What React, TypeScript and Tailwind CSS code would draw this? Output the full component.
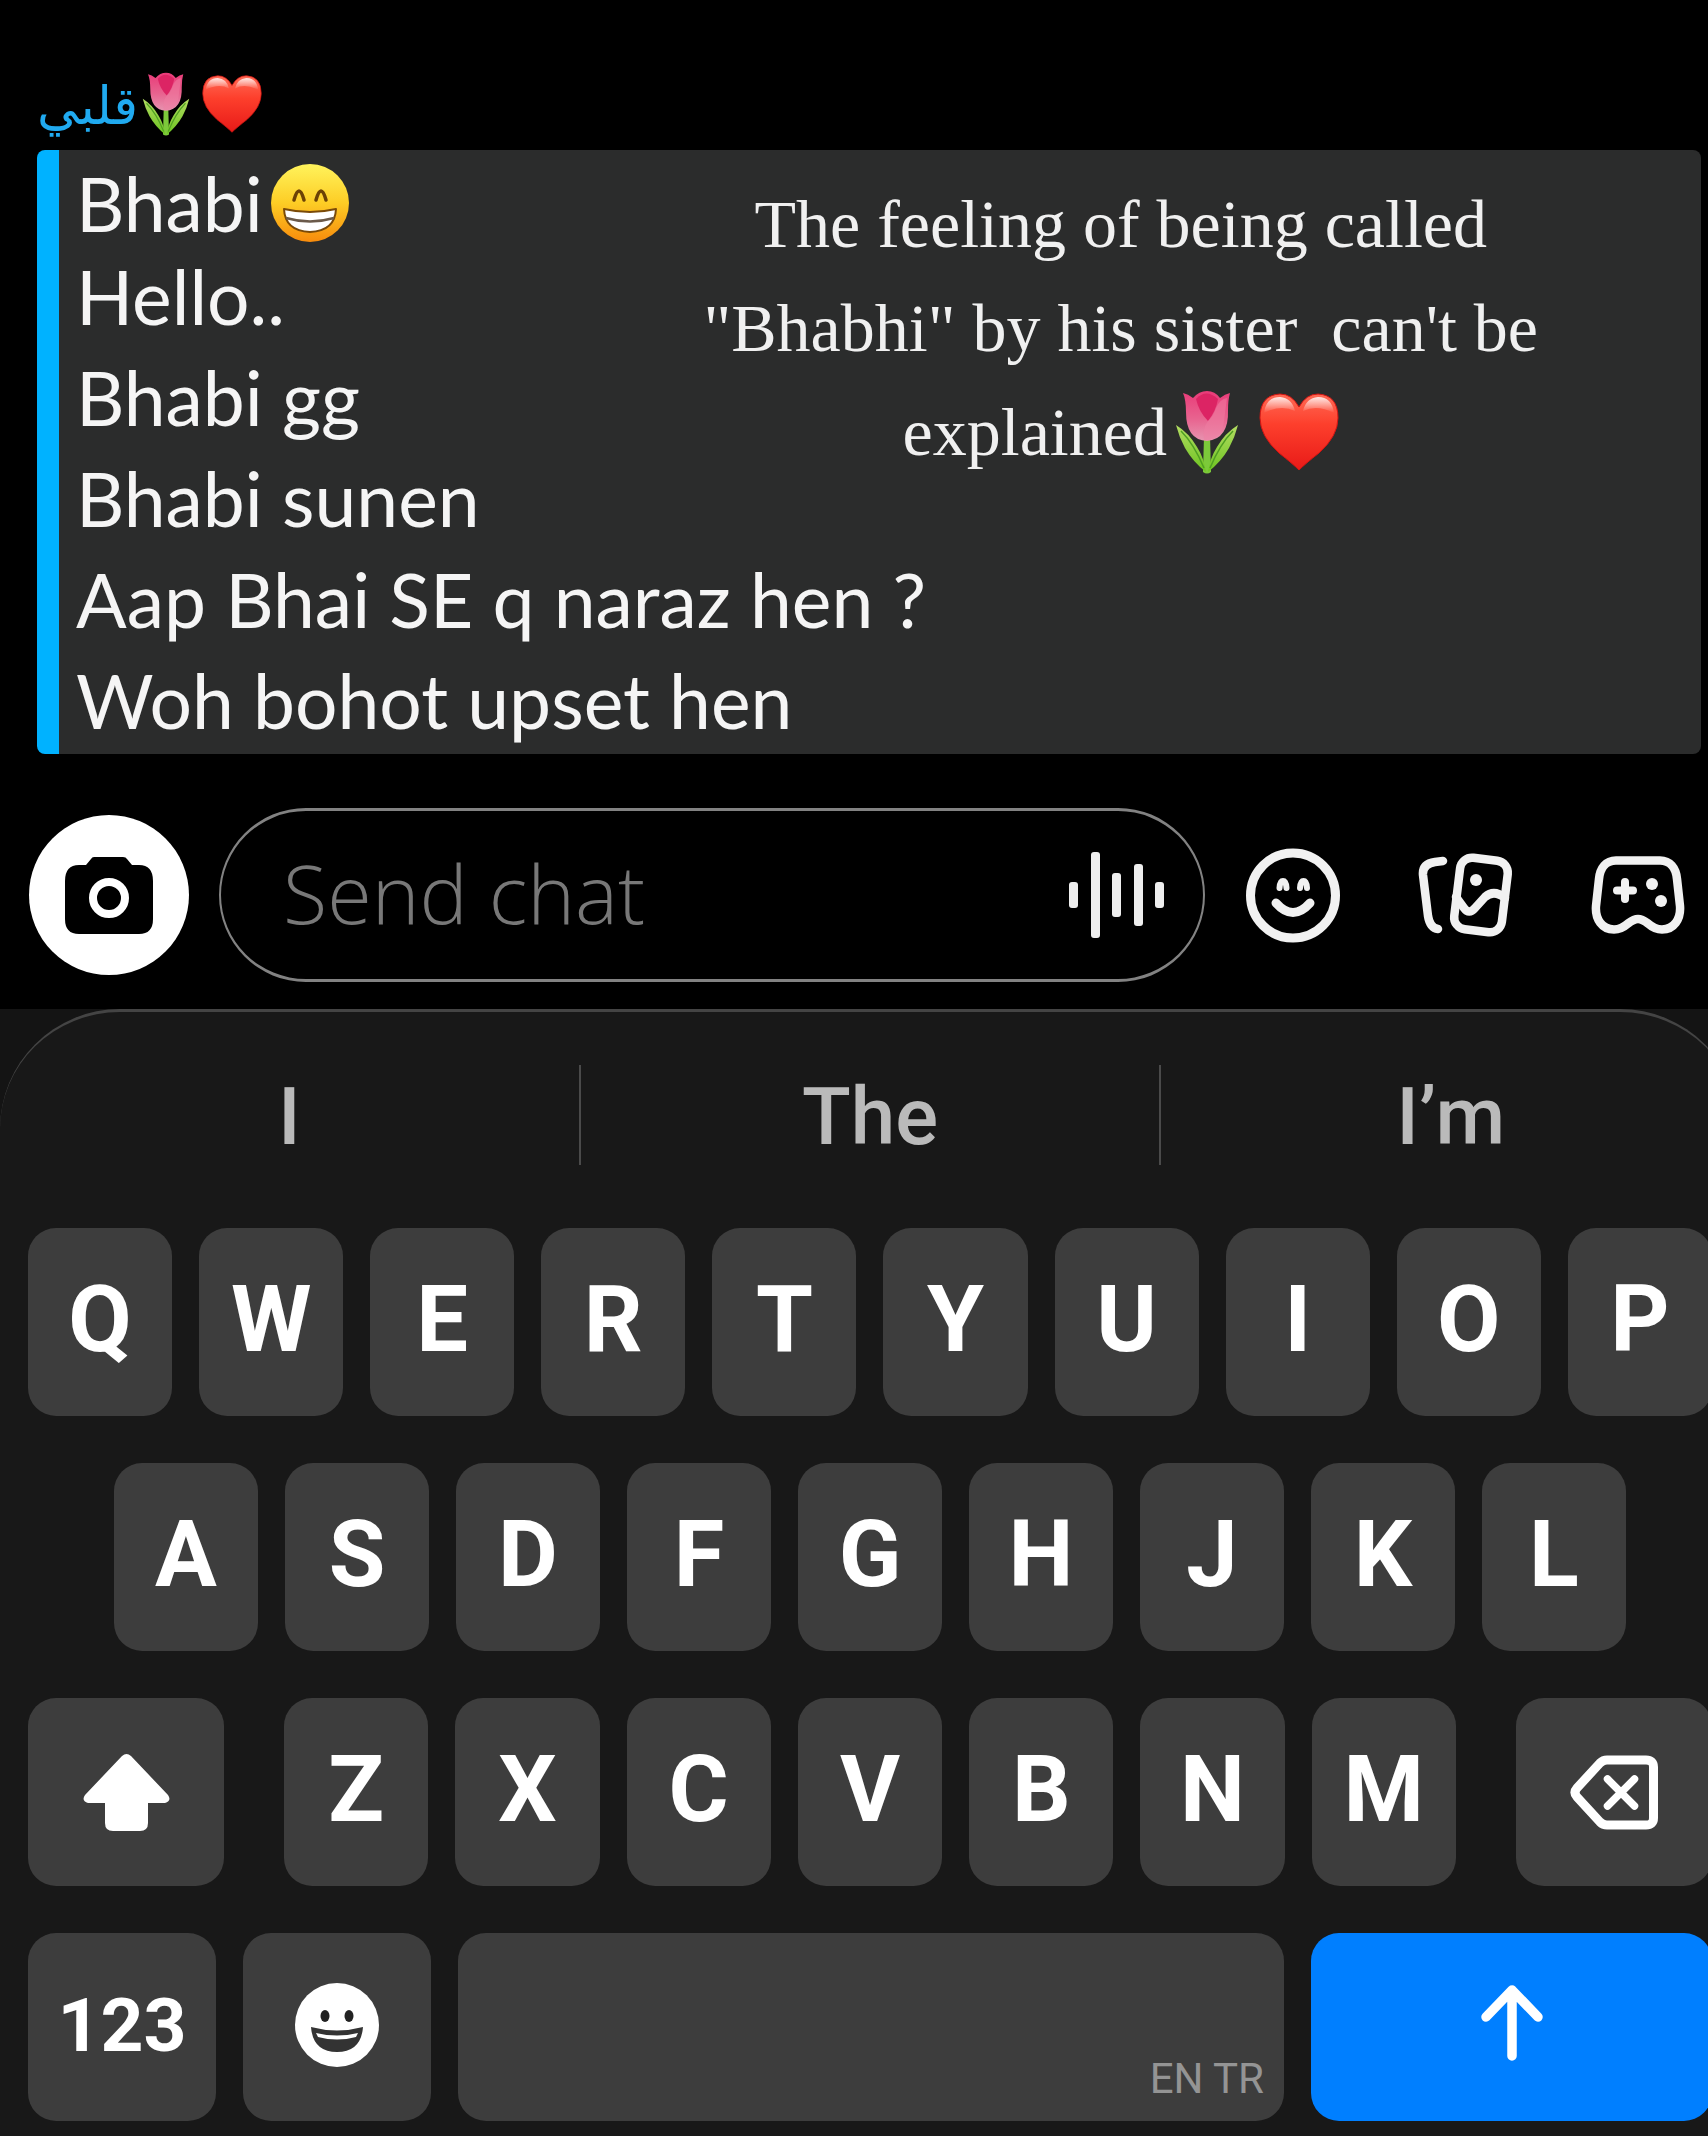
import type { ReactNode } from 'react';

const messages = ['Hello..', 'Bhabi gg', 'Bhabi sunen', 'Aap Bhai SE q naraz hen ?', 'Woh bohot upset hen'];
const suggestions = ['I', 'The', 'I’m'];

function Tulip({ className }: { className: string }) {
  return (
    <svg viewBox="0 0 64 84" preserveAspectRatio="none" className={className} role="img" aria-label="tulip">
      <defs>
        <linearGradient id="petal" x1="0" y1="0" x2="0" y2="1">
          <stop offset="0" stopColor="#e93a78" />
          <stop offset="0.55" stopColor="#e8638f" />
          <stop offset="1" stopColor="#e794b0" />
        </linearGradient>
        <linearGradient id="leaf" x1="0" y1="0" x2="0" y2="1">
          <stop offset="0" stopColor="#b3dc62" />
          <stop offset="1" stopColor="#6cc420" />
        </linearGradient>
      </defs>
      <path d="M29 46h6l1 36q-4 3-8 0Z" fill="#7cc93a" />
      <path d="M1 35Q14 43 22 57Q29 68 31 82Q18 72 10 58Q4 47 1 35Z" fill="url(#leaf)" />
      <path d="M63 35Q50 43 42 57Q35 68 33 82Q46 72 54 58Q60 47 63 35Z" fill="url(#leaf)" />
      <path d="M6 41Q19 54 29 78" fill="none" stroke="#4f9f22" strokeWidth="1.5" />
      <path d="M58 41Q45 54 35 78" fill="none" stroke="#4f9f22" strokeWidth="1.5" />
      <path d="M8 3Q13 4 18 8Q24 1 32 1Q40 1 45 8Q50 4 55 3Q53 10 53 20Q54 49 32 51Q11 50 11 22Q11 10 8 3Z" fill="url(#petal)" />
      <path d="M21 9Q31-2 43 9Q41 21 33 31Q24 22 21 9Z" fill="#dc2464" />
      <path d="M33 31Q27 39 29 50Q47 51 49 31L52 8Q45 9 41 18Q38 27 33 31Z" fill="#ef7ea3" opacity="0.55" />
    </svg>
  );
}

function Heart({ className }: { className: string }) {
  return (
    <svg viewBox="0 0 80 78" preserveAspectRatio="none" className={className} role="img" aria-label="red heart">
      <defs>
        <linearGradient id="heart" x1="0" y1="0" x2="0" y2="1">
          <stop offset="0" stopColor="#ff6a55" />
          <stop offset="0.4" stopColor="#fd3f2c" />
          <stop offset="1" stopColor="#e81a18" />
        </linearGradient>
        <linearGradient id="heartShine" x1="0" y1="0" x2="0" y2="1">
          <stop offset="0" stopColor="#ffffff" stopOpacity="0.85" />
          <stop offset="1" stopColor="#ffffff" stopOpacity="0" />
        </linearGradient>
      </defs>
      <path
        d="M40 14Q33 1 21 1Q1 2 1 25Q1 43 20 60Q34 71 40 77Q46 71 60 60Q79 43 79 25Q79 2 59 1Q47 1 40 14Z"
        fill="url(#heart)"
        stroke="#d41412"
        strokeWidth="1"
      />
      <path d="M5 20Q7 4 21 4Q33 5 36 18Q22 11 5 20Z" fill="url(#heartShine)" />
      <path d="M44 18Q47 5 59 4Q73 4 75 20Q58 11 44 18Z" fill="url(#heartShine)" />
    </svg>
  );
}

function BeamingFace() {
  return (
    <svg viewBox="0 0 78 78" className="size-[78px]" role="img" aria-label="beaming face">
      <defs>
        <linearGradient id="face" x1="0" y1="0" x2="0" y2="1">
          <stop offset="0" stopColor="#fff35c" />
          <stop offset="0.5" stopColor="#fdcd25" />
          <stop offset="1" stopColor="#f78b0c" />
        </linearGradient>
      </defs>
      <circle cx="39" cy="39" r="39" fill="url(#face)" />
      <path d="M23 36q5-18 10 0M45 36q5-18 10 0" fill="none" stroke="#6b4206" strokeWidth="3.5" strokeLinecap="round" />
      <path d="M13 45Q39 51 65 45Q64 67 39 68Q14 67 13 45Z" fill="#fff" stroke="#7a4a08" strokeWidth="2" strokeLinejoin="round" />
      <path d="M15 54Q39 61 63 54" fill="none" stroke="#6b5a4a" strokeWidth="2.5" />
    </svg>
  );
}

function CameraIcon() {
  return (
    <svg viewBox="0 0 88 77" className="w-[88px]" aria-hidden="true">
      <path
        d="M29 0H58Q61 0 62 2L67 8H74Q88 8 88 24V62Q88 77 74 77H14Q0 77 0 62V24Q0 8 14 8H21L26 2Q27 0 29 0Z"
        fill="#000"
      />
      <circle cx="44" cy="41" r="16" fill="none" stroke="#fff" strokeWidth="8" />
    </svg>
  );
}

function VoiceIcon() {
  return (
    <svg viewBox="0 0 96 88" className="w-24" fill="#eee" aria-hidden="true">
      <rect x="0" y="31" width="9" height="26" rx="3" />
      <rect x="22" y="1" width="9" height="86" rx="3" />
      <rect x="43" y="22" width="9" height="44" rx="3" />
      <rect x="65" y="13" width="9" height="62" rx="3" />
      <rect x="86" y="31" width="9" height="26" rx="3" />
    </svg>
  );
}

function SmileIcon() {
  return (
    <svg viewBox="0 0 94 95" className="w-[94px]" fill="none" stroke="#f1f1f1" strokeLinecap="round" aria-hidden="true">
      <circle cx="47" cy="47.5" r="42.5" strokeWidth="9" />
      <path d="M33.500 40Q34 33 37 33Q40 33 40.500 40M54 40Q54.500 33 57.500 33Q60.500 33 61 40" strokeWidth="6" />
      <path d="M30 55Q47 74 64 55" strokeWidth="9" />
    </svg>
  );
}

function CardsIcon() {
  return (
    <svg
      viewBox="0 0 95 86"
      className="w-[95px]"
      fill="none"
      stroke="#f1f1f1"
      strokeWidth="8.5"
      strokeLinecap="round"
      strokeLinejoin="round"
      aria-hidden="true"
    >
      <path d="M25 9L17 10Q4 12 5 23L10 64Q12 76 20 77" />
      <rect x="39" y="7" width="48" height="72" rx="12" transform="rotate(7 63 43)" />
      <path d="M38 45L46 56Q51 63 57 56L67 45Q76 37 87 46" />
      <circle cx="58" cy="28" r="6" fill="#f1f1f1" stroke="none" />
    </svg>
  );
}

function GamepadIcon() {
  return (
    <svg viewBox="0 0 94 78" className="w-[94px]" fill="none" stroke="#f1f1f1" strokeLinecap="round" aria-hidden="true">
      <path
        d="M25 4.500H69C79 4.500 85 12 86 23L89 50C90 63 83 73.500 71 73.500C65 73.500 61 71 57 67.500C49 61.500 45 61.500 37 67.500C33 71 29 73.500 23 73.500C11 73.500 4 63 5 50L8 23C9 12 15 4.500 25 4.500Z"
        strokeWidth="8.5"
        strokeLinejoin="round"
      />
      <path d="M34 26V43M26 34.500H42" strokeWidth="8" />
      <circle cx="61" cy="28" r="6" fill="#f1f1f1" stroke="none" />
      <circle cx="70" cy="45" r="6" fill="#f1f1f1" stroke="none" />
    </svg>
  );
}

function ShiftIcon() {
  return (
    <svg viewBox="0 0 87 77" className="w-[87px]" fill="#fff" aria-hidden="true">
      <path d="M39 2Q43.500-2 48 2L85 41Q89 47 82 49H65V69Q65 77 57 77H30Q22 77 22 69V49H5Q-2 47 2 41Z" />
    </svg>
  );
}

function BackspaceIcon() {
  return (
    <svg viewBox="0 0 88 75" className="w-[88px]" fill="none" stroke="#fff" strokeLinecap="round" aria-hidden="true">
      <path
        d="M37 5H76Q83.500 5 83.500 12V63Q83.500 70 76 70H37Q33 70 30 67L7 42Q3 37.500 7 33L30 8Q33 5 37 5Z"
        strokeWidth="9"
        strokeLinejoin="round"
      />
      <path d="M37.500 24L64.500 51M64.500 24L37.500 51" strokeWidth="7.5" />
    </svg>
  );
}

function GrinIcon() {
  return (
    <svg viewBox="0 0 84 84" className="w-[84px]" aria-hidden="true">
      <circle cx="42" cy="42" r="42" fill="#fff" />
      <ellipse cx="30" cy="33" rx="4.500" ry="6" fill="#222" />
      <ellipse cx="54" cy="33" rx="4.500" ry="6" fill="#222" />
      <path d="M16 44Q42 51 68 44Q66 69 42 69Q18 69 16 44Z" fill="#333" />
      <path d="M21 50Q42 55 63 50L61 54Q42 59 23 54Z" fill="#fff" />
    </svg>
  );
}

function SendIcon() {
  return (
    <svg viewBox="0 0 62 76" className="w-[62px]" fill="none" stroke="#fff" strokeWidth="9.5" strokeLinecap="round" strokeLinejoin="round" aria-hidden="true">
      <path d="M31 5V71M5 32L31 5L57 32" />
    </svg>
  );
}

function Key({ label, className, children }: { label?: string; className: string; children: ReactNode }) {
  return (
    <button
      type="button"
      aria-label={label}
      className={`flex h-[188px] items-center justify-center rounded-[28px] bg-[#3d3d3d] font-bold text-white ${className}`}
    >
      {children}
    </button>
  );
}

function Letters({ letters }: { letters: string }) {
  return letters.split('').map((letter) => (
    <Key key={letter} className="min-w-0 flex-1 pb-1 text-[92px]">
      {letter}
    </Key>
  ));
}

export default function App() {
  return (
    <main className="min-h-screen overflow-hidden bg-black text-white">
      <section className="pr-[7px] pl-[37px] pt-[58px]">
        <h1 className="flex h-[92px] items-center font-['Noto_Sans','DejaVu_Sans',sans-serif] text-[52px] text-[#20aaf0]">
          <span>قلبي</span>
          <Tulip className="ml-1 h-16 w-12" />
          <Heart className="ml-3 h-[58px] w-[60px]" />
        </h1>

        <div className="relative rounded-lg border-l-[22px] border-[#00b2ff] bg-[#2b2c2c]">
          <ul className="pb-[3px] pl-[17px] pt-[10px] font-['Lato',sans-serif] text-[75px] leading-[101px] text-[#f5f5f5]">
            <li className="flex h-[86px] items-center gap-2">
              Bhabi
              <BeamingFace />
            </li>
            {messages.map((message) => (
              <li key={message}>{message}</li>
            ))}
          </ul>
          {/* caption floats over the quoted messages */}
          <p className="absolute top-[22px] right-[163px] text-center font-['Liberation_Serif',serif] text-[68px] leading-[104px] whitespace-pre text-[#f0f0f0]">
            The feeling of being called
            <br />
            {'"Bhabhi" by his sister  can\'t be'}
            <br />
            <span className="flex items-center justify-center">
              explained
              <Tulip className="ml-2 h-[84px] w-16" />
              <Heart className="ml-5 h-[78px] w-20" />
            </span>
          </p>
        </div>
      </section>

      <form className="flex items-center pt-[54px] pr-[23px] pb-[27px] pl-[29px]">
        <button type="button" aria-label="Camera" className="flex size-40 shrink-0 items-center justify-center rounded-full bg-white">
          <CameraIcon />
        </button>
        <div className="mr-[41px] ml-[30px] flex h-[174px] min-w-0 flex-1 items-center rounded-full border-x-2 border-y-[3px] border-[#828282] pr-[38px] pl-[62px]">
          <input
            type="text"
            aria-label="Send chat"
            placeholder="Send chat"
            className="min-w-0 flex-1 bg-transparent pb-1 font-['Open_Sans',sans-serif] text-[81px] leading-[100px] font-light outline-none placeholder:text-[#787878]"
          />
          <button type="button" aria-label="Voice note">
            <VoiceIcon />
          </button>
        </div>
        <div className="flex items-center gap-[78px]">
          <button type="button" aria-label="Stickers">
            <SmileIcon />
          </button>
          <button type="button" aria-label="Memories">
            <CardsIcon />
          </button>
          <button type="button" aria-label="Games">
            <GamepadIcon />
          </button>
        </div>
      </form>

      {/* keyboard runs a little past the right edge of the screen */}
      <section aria-label="Keyboard" className="overflow-hidden bg-[#141414] font-['Roboto',sans-serif]">
        <div className="-mr-8 rounded-t-[120px] border-t-[3px] border-[#444] bg-[#181818] pb-[15px]">
          <div className="flex pt-[53px] pb-[63px]">
            {suggestions.map((word) => (
              <button
                key={word}
                type="button"
                className="flex h-[100px] flex-1 items-center justify-center border-r-2 border-[#4a4a4a] pt-1 text-[80px] font-medium text-[#bababa] last:border-r-0"
              >
                {word}
              </button>
            ))}
          </div>

          <div className="flex flex-col gap-[47px] px-7">
            <div className="flex gap-[27px]">
              <Letters letters="QWERTYUIOP" />
            </div>
            <div className="flex gap-[27px] px-[86px]">
              <Letters letters="ASDFGHJKL" />
            </div>
            <div className="flex gap-[60px]">
              <Key label="Shift" className="w-[196px] shrink-0">
                <ShiftIcon />
              </Key>
              <div className="flex min-w-0 flex-1 gap-[27px]">
                <Letters letters="ZXCVBNM" />
              </div>
              <Key label="Delete" className="w-[196px] shrink-0">
                <BackspaceIcon />
              </Key>
            </div>
            <div className="flex gap-[27px]">
              <Key className="w-[188px] shrink-0 pb-1 text-[75px]">123</Key>
              <Key label="Emoji" className="w-[188px] shrink-0 pb-1">
                <GrinIcon />
              </Key>
              <button
                type="button"
                aria-label="Space, EN TR"
                className="flex min-w-0 flex-1 items-end justify-end rounded-[28px] bg-[#3d3d3d] pr-5 pb-3 text-[42px] leading-[60px] text-[#949494]"
              >
                EN TR
              </button>
              <button
                type="button"
                aria-label="Send"
                className="flex h-[188px] w-[401px] shrink-0 items-center justify-center rounded-[28px] bg-[#007fff] pb-2"
              >
                <SendIcon />
              </button>
            </div>
          </div>
        </div>
      </section>
    </main>
  );
}
